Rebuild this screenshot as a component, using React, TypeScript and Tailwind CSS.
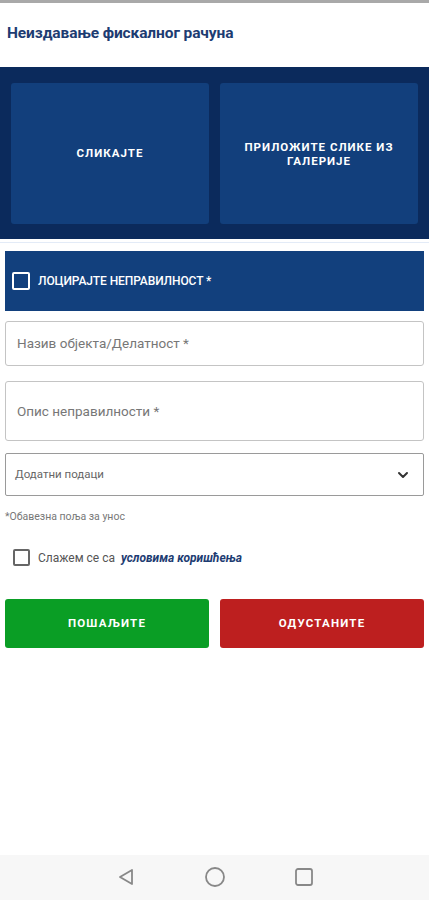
import { ChevronDown } from "lucide-react";

const font = { fontFamily: "Roboto, 'Liberation Sans', sans-serif" };

const App = () => {
  return (
    <div className="w-[429px] h-[900px] bg-white flex flex-col" style={font}>
      <div className="h-[3px] bg-[#a9a9a9]" />
      <div className="h-[64px] flex items-center px-[7px] pb-[3px]">
        <h1 className="text-[15.5px] font-bold text-[#1d3c72] tracking-[-0.1px]">
          Неиздавање фискалног рачуна
        </h1>
      </div>

      <div className="bg-[#0b2a5c] h-[172px] px-[11px] pt-[16px] pb-[15px] grid grid-cols-2 gap-[11px]">
        <button className="bg-[#123f7c] rounded-[3px] flex items-center justify-center text-white text-[11.5px] font-bold tracking-[1px]">
          СЛИКАЈТЕ
        </button>
        <button className="bg-[#123f7c] rounded-[3px] flex items-center justify-center text-white text-[11.5px] font-bold tracking-[1px] leading-[14px] text-center px-4">
          ПРИЛОЖИТЕ СЛИКЕ ИЗ ГАЛЕРИЈЕ
        </button>
      </div>
      <div className="h-[3px]" />
      <div className="h-px bg-[#e3ebf7] mx-0" />

      <div className="px-[5px] pt-[8px] flex flex-col">
        <div className="h-[60px] bg-[#12407d] flex items-center px-[7px] gap-[8px]">
          <span className="w-[18px] h-[18px] border-2 border-white rounded-[2px]" />
          <span className="text-white text-[12px] font-medium tracking-[-0.1px]">
            ЛОЦИРАЈТЕ НЕПРАВИЛНОСТ *
          </span>
        </div>

        <div className="mt-[10px] h-[45px] border border-[#c4c4c4] rounded-[3px] flex items-center px-[11px] text-[13.5px] text-[#777]">
          Назив објекта/Делатност *
        </div>

        <div className="mt-[15px] h-[60px] border border-[#c4c4c4] rounded-[3px] flex items-center px-[11px] text-[13.5px] text-[#777]">
          Опис неправилности *
        </div>

        <div className="mt-[12px] h-[43px] border border-[#9a9a9a] rounded-[2px] flex items-center justify-between pl-[9px] pr-[12px]">
          <span className="text-[11.5px] text-[#666]">Додатни подаци</span>
          <ChevronDown className="w-[16px] h-[16px] text-[#333]" strokeWidth={3} />
        </div>

        <p className="mt-[13px] text-[10.5px] text-[#777]">*Обавезна поља за унос</p>

        <div className="mt-[24px] flex items-center px-[8px] gap-[8px]">
          <span className="w-[17px] h-[17px] border-2 border-[#666] rounded-[2px]" />
          <span className="text-[12px] text-[#555]">
            Слажем се са{" "}
            <span className="font-bold italic text-[#1d3c72] ml-[3px]">условима коришћења</span>
          </span>
        </div>

        <div className="mt-[32px] grid grid-cols-2 gap-[11px]">
          <button className="h-[49px] bg-[#0a9e25] rounded-[3px] text-white text-[11.5px] font-bold tracking-[1.2px]">
            ПОШАЉИТЕ
          </button>
          <button className="h-[49px] bg-[#bd1f1f] rounded-[3px] text-white text-[11.5px] font-bold tracking-[1.2px]">
            ОДУСТАНИТЕ
          </button>
        </div>
      </div>

      <div className="flex-1" />
      <div className="h-[45px] bg-[#f7f7f7] flex items-center justify-center gap-[68px] pb-[2px]">
        <svg width="20" height="20" viewBox="0 0 20 20" fill="none" stroke="#888" strokeWidth="1.8" strokeLinejoin="round">
          <path d="M16 3 L4 10 L16 17 Z" />
        </svg>
        <svg width="22" height="22" viewBox="0 0 22 22" fill="none" stroke="#888" strokeWidth="1.8">
          <circle cx="11" cy="11" r="9" />
        </svg>
        <svg width="20" height="20" viewBox="0 0 20 20" fill="none" stroke="#888" strokeWidth="1.8">
          <rect x="2" y="2" width="16" height="16" rx="2" />
        </svg>
      </div>
    </div>
  );
};

export default App;
